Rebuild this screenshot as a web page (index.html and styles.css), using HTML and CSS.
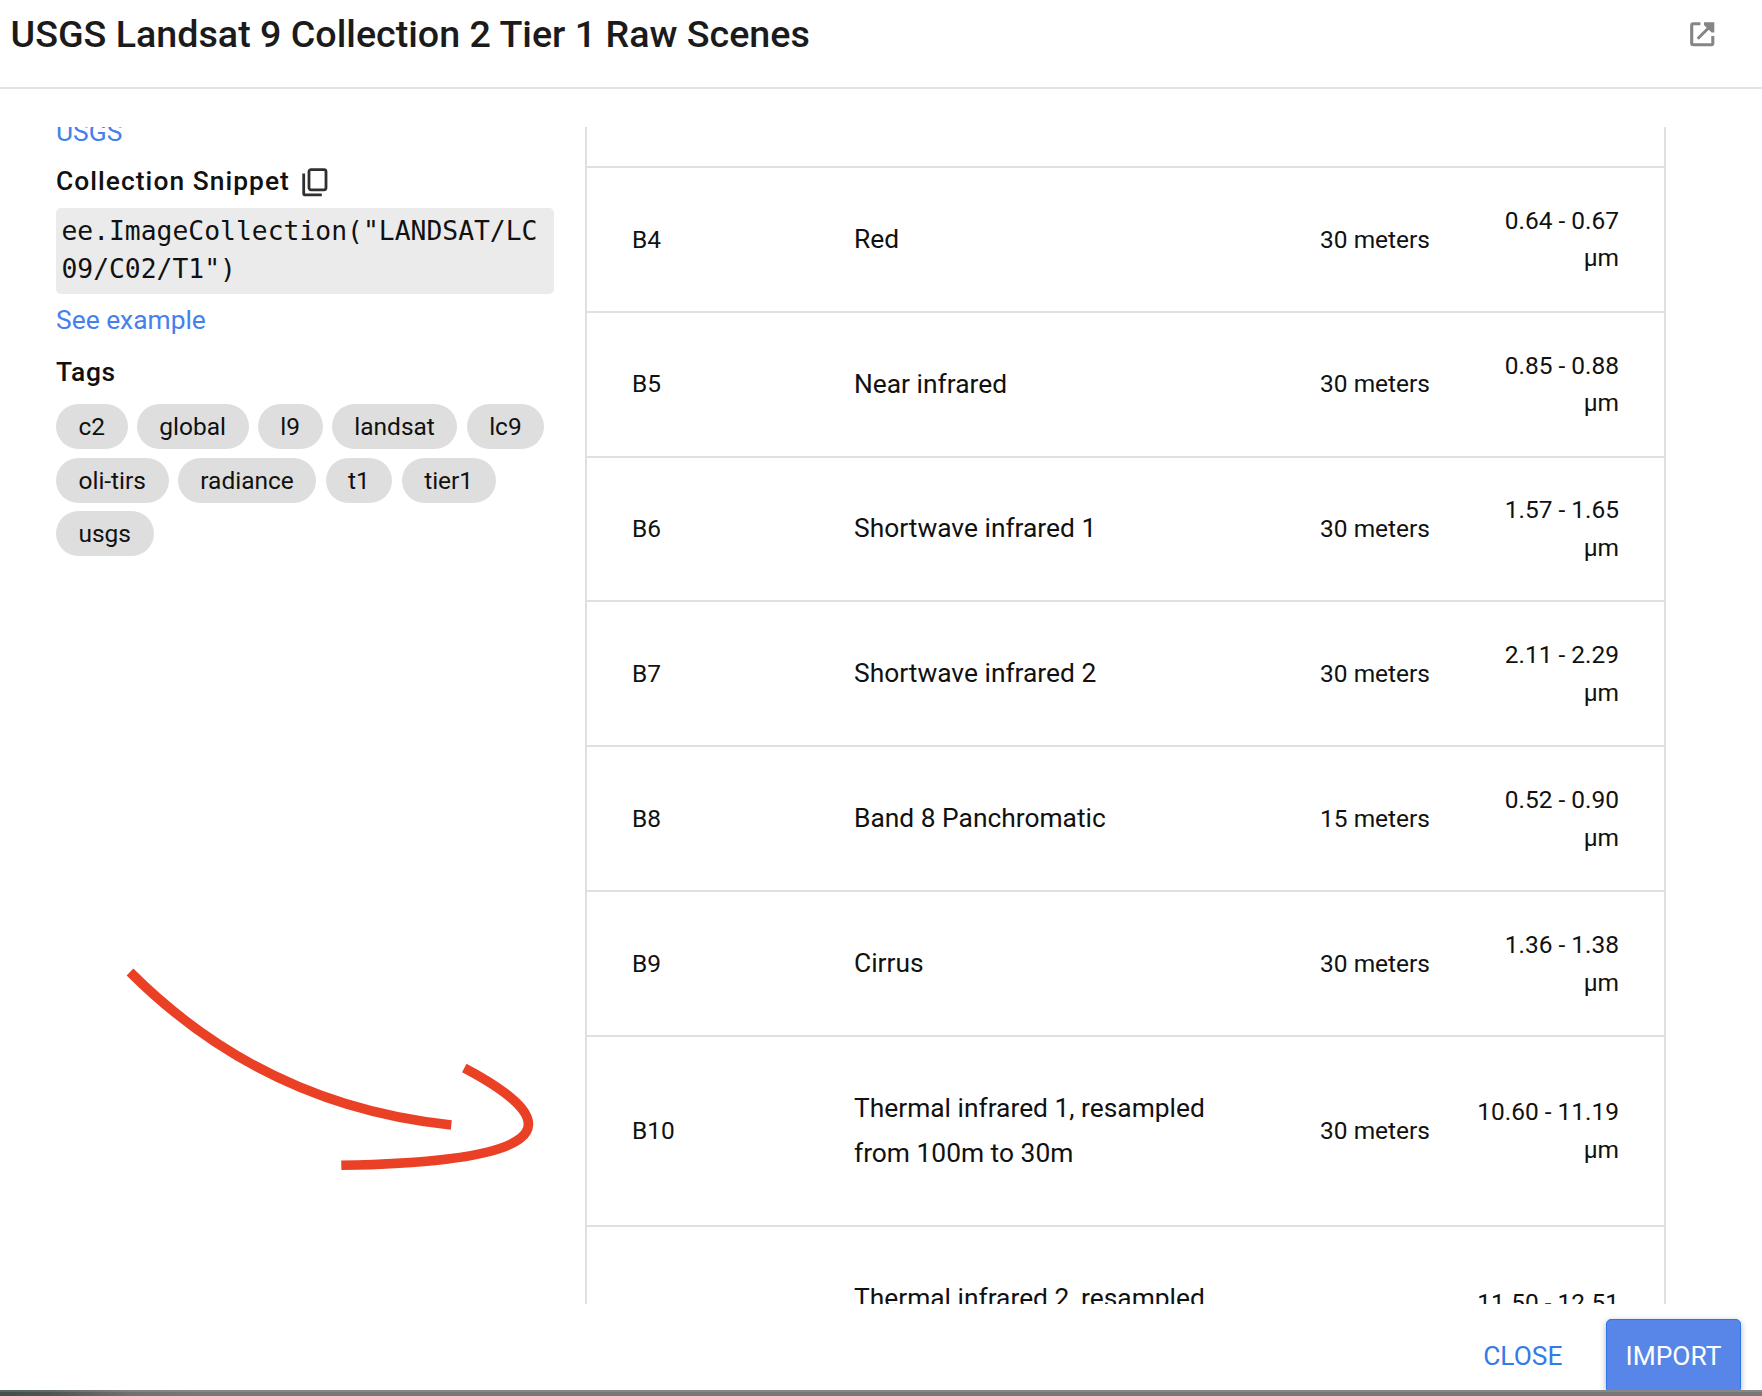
FILE: index.html
```html
<!DOCTYPE html>
<html lang="en">
<head>
<meta charset="utf-8">
<title>USGS Landsat 9 Collection 2 Tier 1 Raw Scenes</title>
<link rel="stylesheet" href="styles.css">
</head>
<body>
<div class="dialog">
  <header class="dialog-header">
    <h1 class="title">USGS Landsat 9 Collection 2 Tier 1 Raw Scenes</h1>
    <svg class="open-icon" viewBox="0 0 25 25" aria-label="Open in new tab">
      <path d="M10.4 1.7H3.2Q1.7 1.7 1.7 3.2V21.3Q1.7 22.8 3.2 22.8H21.3Q22.8 22.8 22.8 21.3V14" fill="none" stroke="#858585" stroke-width="3.1"/>
      <path d="M7.7 16.8L20 4.5" fill="none" stroke="#858585" stroke-width="3"/>
      <path d="M14 .2H24.3V10.4H21.6L14 2.9Z" fill="#858585"/>
    </svg>
  </header>

  <main class="content">
    <aside class="sidebar">
      <a class="link provider">USGS</a>
      <h2 class="label snippet-label">Collection Snippet
        <svg class="copy-icon" viewBox="0 0 26 29" aria-label="Copy">
          <g fill="none" stroke="#303030" stroke-width="2.8">
            <rect x="7" y="1.6" width="17" height="20.2" rx="2"/>
            <path d="M1.7 5.4V25.4Q1.7 26.8 3.1 26.8H19.8"/>
          </g>
        </svg>
      </h2>
      <code class="snippet">ee.ImageCollection("LANDSAT/LC09/C02/T1")</code>
      <a class="link example">See example</a>
      <h2 class="label tags-label">Tags</h2>
      <div class="tags">
        <span class="tag">c2</span>
        <span class="tag">global</span>
        <span class="tag">l9</span>
        <span class="tag">landsat</span>
        <span class="tag">lc9</span>
        <span class="tag">oli-tirs</span>
        <span class="tag">radiance</span>
        <span class="tag">t1</span>
        <span class="tag">tier1</span>
        <span class="tag">usgs</span>
      </div>
    </aside>

    <section class="bands">
      <div class="row"><div class="name">B3</div><div class="desc">Green</div><div class="res">30 meters</div><div class="range">0.53 - 0.59 µm</div></div>
      <div class="row"><div class="name">B4</div><div class="desc">Red</div><div class="res">30 meters</div><div class="range">0.64 - 0.67 µm</div></div>
      <div class="row"><div class="name">B5</div><div class="desc">Near infrared</div><div class="res">30 meters</div><div class="range">0.85 - 0.88 µm</div></div>
      <div class="row"><div class="name">B6</div><div class="desc">Shortwave infrared 1</div><div class="res">30 meters</div><div class="range">1.57 - 1.65 µm</div></div>
      <div class="row"><div class="name">B7</div><div class="desc">Shortwave infrared 2</div><div class="res">30 meters</div><div class="range">2.11 - 2.29 µm</div></div>
      <div class="row"><div class="name">B8</div><div class="desc">Band 8 Panchromatic</div><div class="res">15 meters</div><div class="range">0.52 - 0.90 µm</div></div>
      <div class="row"><div class="name">B9</div><div class="desc">Cirrus</div><div class="res">30 meters</div><div class="range">1.36 - 1.38 µm</div></div>
      <div class="row tall"><div class="name">B10</div><div class="desc">Thermal infrared 1, resampled from 100m to 30m</div><div class="res">30 meters</div><div class="range">10.60 - 11.19 µm</div></div>
      <div class="row tall"><div class="name">B11</div><div class="desc">Thermal infrared 2, resampled from 100m to 30m</div><div class="res">30 meters</div><div class="range">11.50 - 12.51 µm</div></div>
    </section>
  </main>

  <footer class="actions">
    <button class="btn close">CLOSE</button>
    <button class="btn import">IMPORT</button>
  </footer>
  <div class="backdrop"></div>

  <svg class="arrow" viewBox="120 960 420 220">
    <g fill="none" stroke="#ea4025" stroke-width="9.6">
      <path d="M130 972Q263.7 1105.7 451.3 1125"/>
      <path d="M464.3 1068Q638 1160 341.3 1165.3"/>
    </g>
  </svg>
</div>
</body>
</html>
```

FILE: styles.css
```css
* { box-sizing: border-box; }

body {
  margin: 0;
  background: #fff;
  color: #111;
  font-family: Roboto, "Liberation Sans", sans-serif;
  font-size: 26.36px;
}

.dialog {
  position: relative;
  display: flex;
  flex-direction: column;
  height: 1396px;
  overflow: hidden;
}

.dialog-header {
  display: flex;
  justify-content: space-between;
  align-items: flex-start;
  flex: 0 0 89px;
  padding: 16px 47px 0 10.5px;
  border-bottom: 2px solid #e2e2e2;
}

.title {
  margin: 0;
  font-size: 37.65px;
  line-height: 37.6px;
  font-weight: 500;
  color: #1b1b1b;
}

.open-icon {
  width: 25px;
  height: 25px;
  margin-top: 6px;
}

.content {
  display: flex;
  flex: 0 0 1177px;
  margin-top: 38px;
  padding-left: 56px;
  overflow: hidden;
}

.sidebar {
  display: flex;
  flex-direction: column;
  flex: 0 0 498px;
  margin: -13.3px 31px 0 0;
  line-height: 37.66px;
}

.link { color: #4580ee; }

.label {
  margin: 0;
  font-size: 26.36px;
  font-weight: 500;
  letter-spacing: 1.05px;
}

.snippet-label {
  display: flex;
  align-items: center;
  gap: 12px;
  margin-top: 11.2px;
}

.copy-icon {
  width: 26px;
  height: 29px;
  margin-top: 2px;
}

.snippet {
  margin-top: 7.8px;
  padding: 5.3px 5px 5.3px 5.4px;
  border-radius: 5px;
  background: #ebebeb;
  font-family: "DejaVu Sans Mono", monospace;
  font-size: 26.36px;
  word-break: break-all;
}

.example { margin-top: 8px; }

.tags-label {
  margin-top: 14.7px;
  letter-spacing: .7px;
}

.tags {
  display: flex;
  flex-wrap: wrap;
  gap: 8.6px 9.3px;
  margin-top: 12px;
}

.tag {
  height: 45.1px;
  padding: 0 22.5px;
  border-radius: 22.6px;
  background: #dedede;
  font-size: 24.48px;
  line-height: 45.1px;
}

.bands {
  flex: 0 0 1081px;
  height: 1400px;
  margin-top: -103.83px;
  border: solid #e0e0e0;
  border-width: 0 2px;
}

.row {
  display: flex;
  align-items: center;
  height: 144.83px;
  padding: 0 45px 0 45px;
  border-bottom: 2px solid #e0e0e0;
  font-size: 24.48px;
  line-height: 37.66px;
}

.row.tall { height: 190.2px; }

.name { flex: 0 0 222px; }

.desc {
  flex: 0 0 400px;
  font-size: 26.36px;
  line-height: 45.2px;
}

.res { flex: 0 0 176px; text-align: right; }

.range { flex: 0 0 189px; padding-left: 44px; text-align: right; }

.actions {
  display: flex;
  justify-content: flex-end;
  align-items: flex-start;
  flex: 0 0 86px;
  padding: 15px 21px 0 0;
  overflow: hidden;
}

.btn {
  height: 74px;
  padding: 0;
  border: 0;
  background: none;
  font: 26.36px/74px Roboto, "Liberation Sans", sans-serif;
}

.close { margin-right: 43.5px; color: #357ae9; }

.import {
  width: 135px;
  border: 1px solid #2a76e9;
  border-radius: 5px;
  background: #5786e8;
  color: #fff;
  line-height: 72px;
  box-shadow: 0 2px 6px rgba(0, 0, 0, .3);
}

.backdrop {
  flex: 0 0 6px;
  background:
    linear-gradient(rgba(255, 255, 255, .12) 2px, transparent 2px),
    linear-gradient(90deg, #435049 0, #4b5652 50px, #707070 130px, #777 200px);
}

.arrow {
  position: absolute;
  left: 120px;
  top: 960px;
  width: 420px;
  height: 220px;
}
```
